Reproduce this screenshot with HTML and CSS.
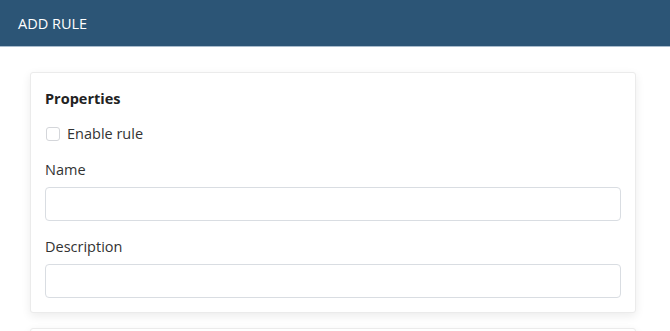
FILE: index.html
```html
<!DOCTYPE html>
<html>
<head>
<meta charset="utf-8">
<link rel="stylesheet" href="styles.css">
</head>
<body>
<header class="topbar"><span class="title">ADD RULE</span></header>
<main class="content">
  <section class="card">
    <h2 class="card-title">Properties</h2>
    <label class="check"><span class="box"></span><span>Enable rule</span></label>
    <div class="field">
      <label class="lbl">Name</label>
      <div class="input"></div>
    </div>
    <div class="field">
      <label class="lbl">Description</label>
      <div class="input"></div>
    </div>
  </section>
  <section class="card next"></section>
</main>
</body>
</html>
```
FILE: styles.css
```css
html, body { margin: 0; padding: 0; background: #fff; }
body { font-family: "Open Sans", "Liberation Sans", sans-serif; color: #212529; overflow: hidden; height: 331px; }
.topbar {
  height: 46px;
  background: #2c5576;
  border-bottom: 1px solid #a9bccd;
  display: flex;
  align-items: center;
  padding-left: 18px;
}
.title { color: #fff; font-size: 14.5px; }
.content { padding: 25px 34px 0 30px; display: flex; flex-direction: column; gap: 15px; }
.card {
  background: #fff;
  border: 1px solid #ebebeb;
  border-radius: 3px;
  box-shadow: 0 3px 10px rgba(0,0,0,0.08);
  padding: 14px;
}
.card-title { margin: 0; font-size: 14.5px; font-weight: 700; line-height: 24px; color: #222; }
.check { display: flex; align-items: center; gap: 7px; margin-top: 12px; font-size: 14.5px; line-height: 22px; color: #333; }
.box { width: 12px; height: 12px; border: 1px solid #d4d6da; border-radius: 3px; background: #fff; margin-left: 1px; }
.field { margin-top: 15px; }
.field + .field { margin-top: 16px; }
.lbl { display: block; font-size: 14.5px; line-height: 20px; color: #333; margin-bottom: 7px; }
.input { height: 32px; border: 1px solid #d9dde2; border-radius: 4px; background: #fff; }
.next { height: 40px; padding: 0; }
```
